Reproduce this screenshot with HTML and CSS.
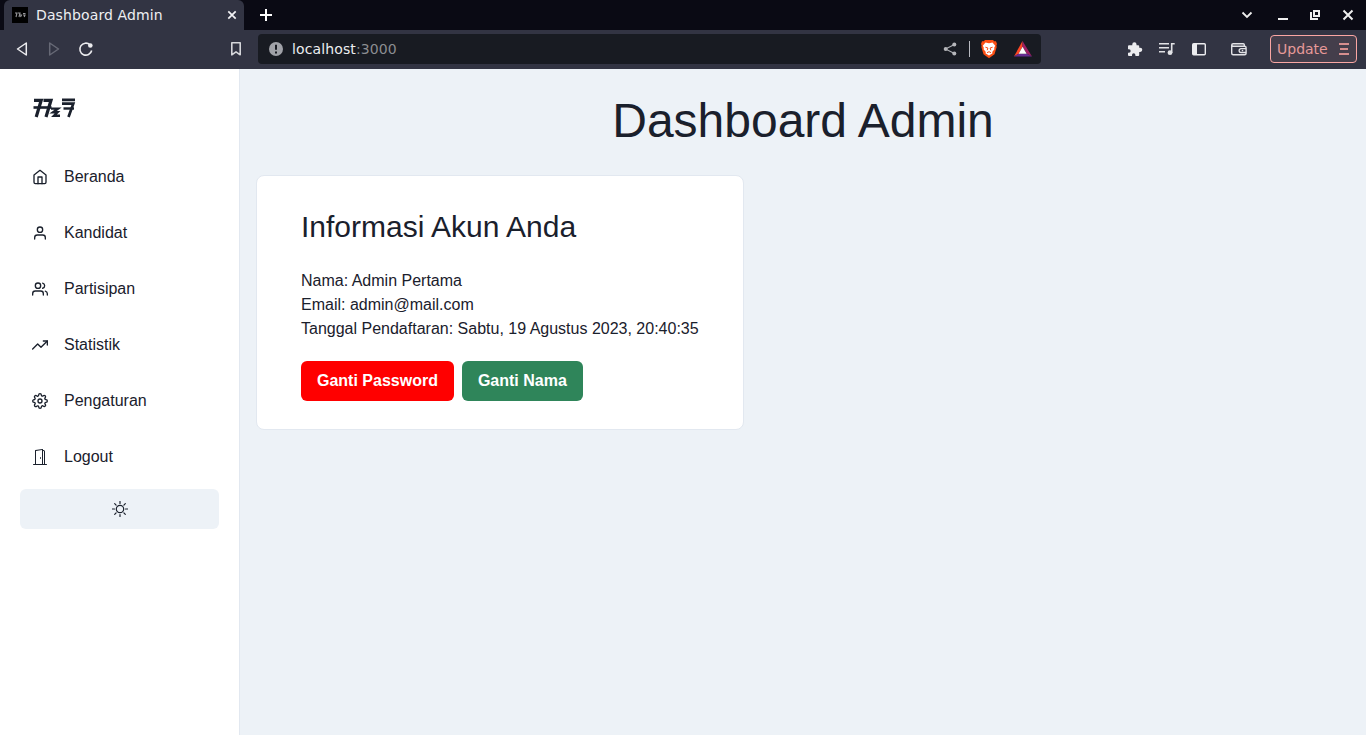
FILE: index.html
```html
<!DOCTYPE html>
<html lang="id">
<head>
<meta charset="utf-8">
<title>Dashboard Admin</title>
<link rel="stylesheet" href="styles.css">
</head>
<body>
<div class="tabstrip">
  <div class="tab">
    <svg class="favicon" width="16" height="16" viewBox="0 0 16 16"><rect width="16" height="16" fill="#000"/><path d="M3 6h2L4 10M6 6h2L7 10M8 8h1.500l-1 2M11 6.500h2.500M11 8h2l-.8 2" fill="none" stroke="#98989c" stroke-width="1.100"/></svg>
    <span class="tab-title">Dashboard Admin</span>
    <svg class="tab-close" width="10" height="10" viewBox="0 0 10 10"><path d="M1.300 1.300l7.400 7.400M8.700 1.300L1.300 8.700" stroke="#f2f2f5" stroke-width="1.700"/></svg>
  </div>
  <svg class="newtab" width="12" height="12" viewBox="0 0 12 12"><path d="M6 0v12M0 6h12" stroke="#fff" stroke-width="2"/></svg>
  <svg class="window-buttons" width="114" height="16" viewBox="1241 7 114 16">
    <path d="M1242.500 12.500l4.500 4.500 4.500-4.500" fill="none" stroke="#eee" stroke-width="1.800"/>
    <path d="M1278 19h10" stroke="#eee" stroke-width="2"/>
    <path d="M1314 11h5v5h-5z" fill="none" stroke="#eee" stroke-width="2"/>
    <path d="M1311 12v7h7" fill="none" stroke="#eee" stroke-width="2"/>
    <path d="M1343.500 10.500l9 9M1352.500 10.500l-9 9" stroke="#eee" stroke-width="2"/>
  </svg>
</div>
<div class="toolbar">
  <svg class="nav-buttons" width="80" height="20" viewBox="15 39 80 20" fill="none" stroke-linejoin="round">
    <path d="M26.300 43v12L17.500 49z" stroke="#ececef" stroke-width="1.500"/>
    <path d="M49.700 43v12l8.800-6z" stroke="#676976" stroke-width="1.500"/>
    <path d="M90 44.800A6 6 0 1 0 91.700 50.500" stroke="#ececef" stroke-width="1.600"/>
    <circle cx="90.300" cy="45.500" r="2.300" fill="#ececef"/>
  </svg>
  <svg class="bookmark" width="12" height="16" viewBox="0 0 12 16"><path d="M1.800 1.800h8.400v12L6 10.800l-4.200 3z" fill="none" stroke="#d5d6da" stroke-width="1.600" stroke-linejoin="round"/></svg>
  <div class="address">
    <svg class="site-info" width="14" height="14" viewBox="0 0 14 14"><circle cx="7" cy="7" r="7" fill="#a0a2a8"/><path d="M7 2.800v5M7 9.500v2" stroke="#181b22" stroke-width="2"/></svg>
    <span class="url">localhost<span class="port">:3000</span></span>
    <svg class="address-actions" width="92" height="22" viewBox="941 38 92 22">
      <path d="M954.500 44.500L945.500 49l9 4.500" fill="none" stroke="#aaacb1" stroke-width="1.200"/>
      <g fill="#b5b6ba"><circle cx="945.700" cy="49" r="2"/><circle cx="954.300" cy="44.400" r="2"/><circle cx="954.300" cy="53.600" r="2"/></g>
      <path d="M969.500 41v16" stroke="#b8bac0"/>
      <path d="M985 40h8l1.200 1.300 1.800-.1 1 2.800-.6 1.500.3 1.500-2.200 7.300-5.500 4-5.500-4-2.200-7.300.3-1.500L981 44l1-2.800 1.800.1z" fill="#fb4f14"/>
      <path d="M985.500 42.600l3.500.7 3.500-.7 2.700 3.200-1 2 .2 1.400-2.200 2.700.3 1.300-3.500 2.300-3.500-2.300.3-1.300-2.200-2.700.2-1.400-1-2z" fill="#fff"/>
      <path d="M985.400 47.200l2.500.8-.7 2.200M992.600 47.200l-2.500.8.7 2.200M987 52.700l2-1 2 1" fill="none" stroke="#fb4f14" stroke-width="1"/>
      <path d="M1022.500 41L1014 56.500l4.700-2.800 3.800-7z" fill="#ff4724"/>
      <path d="M1022.500 41l9.500 15.500-5.200-2.800-4.300-7z" fill="#9e1f63"/>
      <path d="M1014 56.500h18l-5.200-2.800h-8.100z" fill="#662d91"/>
      <path d="M1022.600 46.700l-4 7h8z" fill="#fff"/>
    </svg>
  </div>
  <svg class="extensions" width="122" height="20" viewBox="1127 39 122 20">
    <path d="M1139.200 45.300h-2.700v-1a2.100 2.100 0 0 0-4.200 0v1H1129a1 1 0 0 0-1 1v3h1a1.700 1.700 0 0 1 0 3.400h-1v2.300a1 1 0 0 0 1 1h3v-1a1.700 1.700 0 0 1 3.400 0v1h2.800a1 1 0 0 0 1-1v-3.100h1a2.100 2.100 0 0 0 0-4.200h-1v-1.400a1 1 0 0 0-1-1z" fill="#ececef"/>
    <path d="M1159 43.700h10M1159 47.700h10M1159 51.700h6" stroke="#e2e2e6" stroke-width="1.500"/>
    <path d="M1171.700 53V43.700h3" fill="none" stroke="#e2e2e6" stroke-width="1.600"/><circle cx="1170" cy="52.700" r="2.400" fill="#e2e2e6"/>
    <rect x="1192.700" y="43.700" width="12.600" height="11" rx="1" fill="none" stroke="#ececef" stroke-width="1.400"/><path d="M1193 44h4v11h-4z" fill="#ececef"/>
    <path d="M1244.300 46v-1.200q0-1.100-1.100-1.100h-10q-1.500 0-1.500 1.500v8q0 1.500 1.500 1.500h11.400q1.500 0 1.500-1.500v-5.500q0-1.500-1.500-1.500h-11.300q-1.600 0-1.600-1.400" fill="none" stroke="#e2e2e6" stroke-width="1.400"/>
    <path d="M1246 48.700h-5a1.900 1.900 0 0 0 0 3.800h5" fill="none" stroke="#e2e2e6" stroke-width="1.300"/><circle cx="1242.500" cy="50.600" r=".8" fill="#e2e2e6"/>
  </svg>
  <div class="update"><span>Update</span><svg width="10" height="12" viewBox="0 0 10 12"><path d="M0 1h10M1 6h8M0 11h10" stroke="#d58e8e" stroke-width="2"/></svg></div>
</div>
<div class="page">
  <aside class="sidebar">
    <svg class="logo" width="44" height="22" viewBox="32 97 44 22" fill="none" stroke="#1a202c" stroke-width="3.200">
      <path d="M34 100.300h7.200L36.200 117M43.500 100.300h7.500L46 117"/>
      <path d="M33.500 107.500h18" stroke-width="2.600"/>
      <path d="M51 108.600h7l-5 3.700h4.500l-3.500 3.400h6" stroke-width="2.400"/>
      <path d="M62 99.900h13M62 103.700h11.300L68.500 117" stroke-width="2.700"/>
      <path d="M63.500 108.500h10.500" stroke-width="2.400"/>
    </svg>
    <nav class="menu">
      <a class="item"><svg class="icon" viewBox="0 0 24 24"><path d="M3 9l9-7 9 7v11a2 2 0 0 1-2 2H5a2 2 0 0 1-2-2z"/><path d="M9 22V12h6v10"/></svg>Beranda</a>
      <a class="item"><svg class="icon" viewBox="0 0 24 24"><path d="M20 21v-2a4 4 0 0 0-4-4H8a4 4 0 0 0-4 4v2"/><circle cx="12" cy="7" r="4"/></svg>Kandidat</a>
      <a class="item"><svg class="icon" viewBox="0 0 24 24"><path d="M17 21v-2a4 4 0 0 0-4-4H5a4 4 0 0 0-4 4v2"/><circle cx="9" cy="7" r="4"/><path d="M23 21v-2a4 4 0 0 0-3-3.870M16 3.130a4 4 0 0 1 0 7.750"/></svg>Partisipan</a>
      <a class="item"><svg class="icon" viewBox="0 0 24 24"><path d="M23 6l-9.500 9.500-5-5L1 18"/><path d="M17 6h6v6"/></svg>Statistik</a>
      <a class="item"><svg class="icon" viewBox="0 0 24 24"><circle cx="12" cy="12" r="3"/><path d="M19.400 15a1.650 1.650 0 0 0 .33 1.820l.06.06a2 2 0 0 1 0 2.830 2 2 0 0 1-2.830 0l-.06-.06a1.650 1.650 0 0 0-1.820-.33 1.650 1.650 0 0 0-1 1.510V21a2 2 0 0 1-2 2 2 2 0 0 1-2-2v-.09A1.650 1.650 0 0 0 9 19.400a1.650 1.650 0 0 0-1.820.33l-.06.06a2 2 0 0 1-2.830 0 2 2 0 0 1 0-2.830l.06-.06a1.650 1.650 0 0 0 .33-1.820 1.650 1.650 0 0 0-1.510-1H3a2 2 0 0 1-2-2 2 2 0 0 1 2-2h.09A1.650 1.650 0 0 0 4.600 9a1.650 1.650 0 0 0-.33-1.820l-.06-.06a2 2 0 0 1 0-2.830 2 2 0 0 1 2.830 0l.06.06a1.650 1.650 0 0 0 1.820.33H9a1.650 1.650 0 0 0 1-1.510V3a2 2 0 0 1 2-2 2 2 0 0 1 2 2v.09a1.650 1.650 0 0 0 1 1.510 1.650 1.650 0 0 0 1.820-.33l.06-.06a2 2 0 0 1 2.830 0 2 2 0 0 1 0 2.830l-.06.06a1.650 1.650 0 0 0-.33 1.820V9a1.650 1.650 0 0 0 1.510 1H21a2 2 0 0 1 2 2 2 2 0 0 1-2 2h-.09a1.650 1.650 0 0 0-1.510 1z"/></svg>Pengaturan</a>
      <a class="item"><svg class="icon solid" viewBox="0 0 16 16"><path d="M8.500 10c-.276 0-.5-.448-.5-1s.224-1 .5-1 .5.448.5 1-.224 1-.5 1z"/><path d="M10.828.122A.5.5 0 0 1 11 .5V1h.5A1.500 1.500 0 0 1 13 2.500V15h1.500a.5.5 0 0 1 0 1h-13a.5.5 0 0 1 0-1H3V1.500a.5.5 0 0 1 .43-.495l7-1a.5.5 0 0 1 .398.117zM11.500 2H11v13h1V2.500a.5.5 0 0 0-.5-.5zM4 1.934V15h6V1.077l-6 .857z"/></svg>Logout</a>
    </nav>
    <button class="theme"><svg class="sun" viewBox="0 0 16 16"><circle cx="8" cy="8" r="3.700"/><path d="M8 .5v2M8 13.500v2M.5 8h2M13.500 8h2M2.700 2.700l1.400 1.400M11.900 11.900l1.400 1.400M2.700 13.300l1.400-1.400M11.900 4.100l1.400-1.400"/></svg></button>
  </aside>
  <main class="content">
    <h1 class="heading">Dashboard Admin</h1>
    <section class="card">
      <h2 class="card-title">Informasi Akun Anda</h2>
      <p class="line">Nama: Admin Pertama</p>
      <p class="line">Email: admin@mail.com</p>
      <p class="line">Tanggal Pendaftaran: Sabtu, 19 Agustus 2023, 20:40:35</p>
      <div class="actions"><button class="btn red">Ganti Password</button><button class="btn green">Ganti Nama</button></div>
    </section>
  </main>
</div>
</body>
</html>
```
FILE: styles.css
```css
* { box-sizing: border-box; margin: 0; }
body { height: 735px; overflow: hidden; display: flex; flex-direction: column; font: 16px/24px "Liberation Sans", Arial, sans-serif; color: #1a202c; }
svg { display: block; flex: none; }
button { border: 0; font: inherit; }

.tabstrip { height: 30px; flex: none; display: flex; align-items: center; background: #0a0a14; padding-left: 4px; font: 14px/18px "DejaVu Sans", sans-serif; }
.tab { width: 240px; height: 30px; display: flex; align-items: center; padding: 0 7px 0 8px; border-radius: 6px 6px 0 0; background: #323443; color: #eeeff2; }
.tab-title { margin-left: 8px; flex: 1; letter-spacing: .12px; }
.newtab { margin-left: 16px; }
.window-buttons { margin-left: auto; margin-right: 11px; }

.toolbar { height: 39px; flex: none; display: flex; align-items: center; background: #323443; padding: 0 9px 1px 15px; font: 14px/18px "DejaVu Sans", sans-serif; }
.bookmark { margin-left: 135px; }
.address { width: 783px; height: 30px; margin-left: 16px; padding: 0 8px 0 11px; display: flex; align-items: center; background: #181b22; border-radius: 4px; color: #eceef0; }
.url { margin-left: 9px; flex: 1; letter-spacing: .12px; }
.port { color: #8b8d91; }
.extensions { margin-left: 86px; }
.update { width: 87px; height: 28px; margin-left: auto; padding: 0 7px 0 6px; display: flex; align-items: center; justify-content: space-between; border: 1px solid #faa6a3; border-radius: 4px; background: #443e4b; color: #e79a99; }

.page { flex: 1; display: flex; background: #edf2f7; }
.sidebar { width: 240px; background: #fff; border-right: 1px solid #e2e8f0; }
.logo { margin: 28px 0 0 32px; }
.menu { margin-top: 30px; }
.item { height: 56px; padding: 0 32px; display: flex; align-items: center; gap: 16px; }
.icon { width: 16px; height: 16px; fill: none; stroke: currentColor; stroke-width: 2; stroke-linecap: round; stroke-linejoin: round; }
.solid { fill: currentColor; stroke: none; }
.theme { width: 199px; height: 40px; margin: 4px 0 0 20px; display: flex; align-items: center; justify-content: center; border-radius: 6px; background: #edf2f7; color: #1a202c; }
.sun { width: 16px; height: 16px; fill: none; stroke: currentColor; stroke-width: 1.200; stroke-linecap: round; }

.content { flex: 1; padding: 16px; }
.heading { font-size: 48px; line-height: 72px; font-weight: 400; text-align: center; }
.card { width: 488px; height: 255px; margin-top: 18px; padding: 28px 44px; background: #fff; border: 1px solid #e2e8f0; border-radius: 8px; }
.card-title { font-size: 30px; line-height: 45px; font-weight: 400; margin-bottom: 20px; }
.actions { display: flex; gap: 8px; margin-top: 20px; }
.btn { height: 40px; padding: 0 16px; border-radius: 6px; font-weight: 700; color: #fff; }
.red { background: #f00; }
.green { background: #2f855a; }
```
